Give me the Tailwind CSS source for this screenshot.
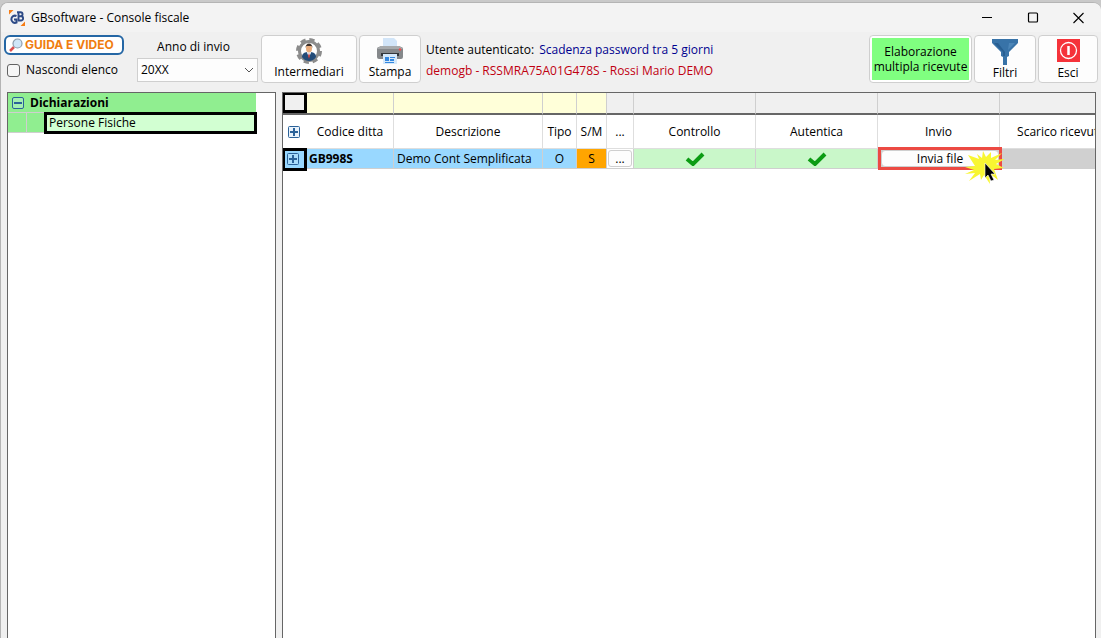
<!DOCTYPE html>
<html lang="it">
<head>
<meta charset="utf-8">
<meta name="viewport" content="width=device-width, initial-scale=1">
<title>GBsoftware - Console fiscale</title>
<script src="https://cdn.jsdelivr.net/npm/@tailwindcss/browser@4"></script>
</head>
<body class="bg-[#c9c9c9] pt-[2px] font-['Open_Sans','Noto_Sans',sans-serif] text-[12px] leading-4 text-black">
<svg class="hidden" aria-hidden="true">
  <symbol id="plus" viewBox="0 0 12 12"><rect x=".5" y=".5" width="11" height="11" rx="1" fill="#e9f2fb" stroke="#2b6299"/><path d="M2 6h8M6 2v8" stroke="#2b6299" stroke-width="2"/></symbol>
  <symbol id="plus-blue" viewBox="0 0 12 12"><rect x=".5" y=".5" width="11" height="11" rx="1" fill="#a9dcfb" stroke="#2b6299"/><path d="M2 6h8M6 2v8" stroke="#2b6299" stroke-width="2"/></symbol>
  <symbol id="check" viewBox="0 0 20 14"><path d="M2 7l6 5L18 2" fill="none" stroke="#0c9c14" stroke-width="4"/></symbol>
</svg>
<div class="flex h-[calc(100vh-2px)] flex-col overflow-hidden rounded-t-lg border-l border-t border-[#b4b4b4] bg-[#f0f0f0]">
  <header class="flex h-[29px] shrink-0 items-center bg-[#f3f3f3] pl-2">
    <svg class="h-4 w-4" viewBox="0 0 16 16" aria-hidden="true"><path d="M0 0h4.500L0 4.500zM16 16h-4.500l4.500-4.500z" fill="#f57c14"/><path d="M7.500 6A3.600 3.600 0 1 0 7.500 12.500V9.500H5" fill="none" stroke="#2d4a86" stroke-width="2"/><path d="M9.500 2v8.500h2.500a2 2 0 0 0 0-4.200H9.500h2a2 2 0 0 0 0-4.100H8" fill="none" stroke="#2d4a86" stroke-width="1.900"/></svg>
    <h1 class="ml-[6px] grow">GBsoftware - Console fiscale</h1>
    <div class="flex">
      <button class="flex h-7 w-[46px] items-center justify-center" aria-label="Riduci"><svg class="h-3 w-3" viewBox="0 0 12 12"><path d="M1 5.500h10" stroke="#000"/></svg></button>
      <button class="flex h-7 w-[45px] items-center justify-center" aria-label="Ingrandisci"><svg class="h-3 w-3" viewBox="0 0 12 12"><rect x="1.500" y="1" width="9" height="9" rx="1" fill="none" stroke="#000" stroke-width="1.200"/></svg></button>
      <button class="flex h-7 w-[46px] items-center justify-center" aria-label="Chiudi"><svg class="h-3 w-3" viewBox="0 0 12 12"><path d="M1.500 1l10 10M11.500 1l-10 10" stroke="#000" stroke-width="1.100"/></svg></button>
    </div>
  </header>

  <div class="flex h-[60px] shrink-0 items-start pl-[3px] pr-[3px] pt-[3px]">
    <div class="w-[133px]">
      <a href="#guida" class="flex h-5 w-[120px] items-center rounded-md border-2 border-[#2567a5] bg-white pl-[3px] font-['Inter',sans-serif] text-[12px] font-bold whitespace-nowrap text-[#f07d0f]">
        <svg class="h-[14px] w-[14px] shrink-0" viewBox="0 0 14 14" aria-hidden="true"><path d="M1 13l4-4" stroke="#dc4f4f" stroke-width="2.500"/><circle cx="8.500" cy="5.500" r="4.500" fill="#cfe6f8" stroke="#8d9dac" stroke-width="1.200"/></svg>
        <span class="ml-[2px]">GUIDA E VIDEO</span>
      </a>
      <label class="mt-[7px] flex items-center pl-[3px]"><input type="checkbox" class="mr-[6px] h-[13px] w-[13px] appearance-none rounded-[3px] border border-[#626262] bg-[#f6f6f6]">Nascondi elenco</label>
    </div>
    <div class="relative w-[121px]">
      <label for="anno" class="mt-1 block pr-2 text-center">Anno di invio</label>
      <select id="anno" class="mt-[3px] block h-6 w-full appearance-none border border-[#cfcfcf] bg-[#fdfdfd] pl-[3px]"><option>20XX</option></select>
      <svg class="pointer-events-none absolute right-1 bottom-2 h-2 w-[10px]" viewBox="0 0 10 8" aria-hidden="true"><path d="M1 2l4 4 4-4" fill="none" stroke="#555"/></svg>
    </div>
    <button class="ml-[3px] flex h-12 w-24 flex-col items-center rounded border border-[#cfcfcf] bg-[#fdfdfd] pt-px">
      <svg class="-mb-px h-7 w-7" viewBox="0 0 28 28" aria-hidden="true"><circle cx="14" cy="14" r="11" fill="none" stroke="#8c8c8c" stroke-width="4" stroke-dasharray="5 3.640"/><circle cx="14" cy="14" r="9.500" fill="#fff" stroke="#8c8c8c" stroke-width="3"/><path d="M7 20c0-4 3-5 7-5s7 1 7 5c-2 3-5 4-7 4s-5-1-7-4z" fill="#234b78"/><path d="M12 14h4v2l-2 4-2-4z" fill="#e6eef5"/><ellipse cx="14" cy="11.500" rx="3" ry="4" fill="#e8ab7b"/><path d="M10.500 11c0-6 7-6 7 0l-1-2h-5z" fill="#3d3029"/><path d="M14 16l1 3-1 3-1-3z" fill="#c43d3d"/></svg>
      Intermediari
    </button>
    <button class="ml-[2px] flex h-12 w-[62px] flex-col items-center rounded border border-[#cfcfcf] bg-[#fdfdfd] pt-px">
      <svg class="-mb-px h-7 w-7" viewBox="0 0 28 28" aria-hidden="true"><path d="M7 1h11l3 3v7H7z" fill="#d2e5f8"/><rect x="1" y="10" width="26" height="12" rx="2" fill="#85888b"/><path d="M1 12l3-3h20l3 3z" fill="#a7aaac"/><path d="M5 16h18v3H5z" fill="#33373b"/><circle cx="24" cy="12.500" r="1.200" fill="#f24b4b"/><path d="M7 17h14v10H7z" fill="#d5e9fb"/><path d="M9 20h4v4H9zM14 20h5v1h-5zM14 22h4v2h-4zM9 25h9v1H9z" fill="#3387df"/></svg>
      Stampa
    </button>
    <div class="ml-[5px] min-w-0 grow whitespace-nowrap pt-[7px]">
      <p>Utente autenticato: <span class="ml-[2px] text-[#00008f]">Scadenza password tra 5 giorni</span></p>
      <p class="mt-[5px] text-[#c00010]">demogb - RSSMRA75A01G478S - Rossi Mario DEMO</p>
    </div>
    <button class="h-12 w-[103px] shrink-0 rounded border border-[#cfcfcf] bg-white p-[2px]"><span class="flex h-full items-center justify-center whitespace-nowrap bg-[#80ff80] leading-[15px]">Elaborazione<br>multipla ricevute</span></button>
    <button class="ml-[2px] flex h-12 w-[62px] shrink-0 flex-col items-center rounded border border-[#cfcfcf] bg-[#fdfdfd] pt-[2px]">
      <svg class="-mb-px h-7 w-7" viewBox="0 0 28 28" aria-hidden="true"><path d="M1 1h26v4l-9 9v4l-2 1v8h-4v-8l-2-1v-4L1 5z" fill="#3873a8"/><path d="M3 5h4l7 9v4h-2v-4z" fill="#285f92"/><path d="M18 5h6l-7 7z" fill="#4c86b8"/></svg>
      Filtri
    </button>
    <button class="ml-[2px] flex h-12 w-[60px] shrink-0 flex-col items-center rounded border border-[#cfcfcf] bg-[#fdfdfd] pt-[3px]">
      <svg class="mb-[3px] h-[23px] w-[23px]" viewBox="0 0 23 23" aria-hidden="true"><path d="M0 0h23v23H0z" fill="#f5333a"/><circle cx="11.500" cy="11.500" r="8" fill="none" stroke="#fff" stroke-width="1.300"/><path d="M11.500 7v9" stroke="#fff" stroke-width="2.500"/></svg>
      Esci
    </button>
  </div>

  <main class="flex min-h-0 grow pl-[6px] pr-[5px]">
    <nav class="mr-[6px] w-[269px] shrink-0 border border-b-0 border-[#666] bg-white" aria-label="Elenco">
      <div class="mr-[19px] flex h-[19px] items-center bg-[#90ee90] pl-1 font-bold">
        <button class="mr-[6px] flex h-3 w-3 items-center justify-center rounded-[2px] border border-[#2b6299] bg-[#a4efb2]" aria-label="Comprimi"><span class="h-[2px] w-2 bg-[#2b6299]"></span></button>Dichiarazioni
      </div>
      <div class="mr-[18px] flex h-[22px]">
        <span class="mb-px w-[19px] border-t border-r border-b border-[#cfcfcf] bg-[#90ee90]"></span><span class="mb-px w-[17px] border-t border-b border-[#cfcfcf] bg-[#90ee90]"></span>
        <a href="#persone" class="flex grow items-center border-[3px] border-black bg-[#d2ffd2] pl-[2px]">Persone Fisiche</a>
      </div>
    </nav>
    <section class="min-w-0 grow overflow-hidden border border-b-0 border-[#666] bg-white" aria-label="Ditte">
      <table class="w-[839px] table-fixed border-separate border-spacing-0 text-center whitespace-nowrap">
        <colgroup><col class="w-6"><col class="w-[87px]"><col class="w-[149px]"><col class="w-[34px]"><col class="w-[30px]"><col class="w-[27px]"><col class="w-[122px]"><col class="w-[122px]"><col class="w-[122px]"><col class="w-[122px]"></colgroup>
        <thead>
          <tr class="h-[22px]">
            <td class="border-b-2 border-[#666] p-0"><div class="h-5 border-[3px] border-l-2 border-t-2 border-black bg-[#f0f0f0]"></div></td>
            <td class="border-r border-b-2 border-r-[#cfcfcf] border-b-[#666] bg-[#ffffd9] p-0"></td>
            <td class="border-r border-b-2 border-r-[#cfcfcf] border-b-[#666] bg-[#ffffd9] p-0"></td>
            <td class="border-r border-b-2 border-r-[#cfcfcf] border-b-[#666] bg-[#ffffd9] p-0"></td>
            <td class="border-r border-b-2 border-r-[#cfcfcf] border-b-[#666] bg-[#ffffd9] p-0"></td>
            <td class="border-r border-b-2 border-r-[#cfcfcf] border-b-[#666] bg-[#f0f0f0] p-0"></td>
            <td class="border-r border-b-2 border-r-[#cfcfcf] border-b-[#666] bg-[#f0f0f0] p-0"></td>
            <td class="border-r border-b-2 border-r-[#cfcfcf] border-b-[#666] bg-[#f0f0f0] p-0"></td>
            <td class="border-r border-b-2 border-r-[#cfcfcf] border-b-[#666] bg-[#f0f0f0] p-0"></td>
            <td class="border-b-2 border-b-[#666] bg-[#f0f0f0] p-0"></td>
          </tr>
          <tr class="h-[34px] *:border-b *:border-[#dedede] *:p-0 *:font-normal">
            <th><button class="ml-[5px] block h-3 w-3" aria-label="Espandi tutto"><svg class="h-3 w-3"><use href="#plus"/></svg></button></th>
            <th class="border-r">Codice ditta</th><th class="border-r">Descrizione</th><th class="border-r">Tipo</th><th class="border-r">S/M</th><th class="border-r">...</th><th class="border-r">Controllo</th><th class="border-r">Autentica</th><th class="border-r">Invio</th><th>Scarico ricevute</th>
          </tr>
        </thead>
        <tbody>
          <tr class="h-5 *:border-b *:border-[#cfcfcf] *:p-0">
            <td class="border-none! bg-[#99d8ff]"><button class="-my-[2px] flex h-[23px] w-full items-center border-[3px] border-l-2 border-black pl-[2px]" aria-label="Espandi"><svg class="h-3 w-3"><use href="#plus-blue"/></svg></button></td>
            <td class="border-r bg-[#99d8ff] text-left font-bold"><span class="pl-[2px]">GB998S</span></td>
            <td class="border-r bg-[#99d8ff] text-left"><span class="pl-[3px]">Demo Cont Semplificata</span></td>
            <td class="border-r bg-[#99d8ff]">O</td>
            <td class="border-r bg-[#ffa500]">S</td>
            <td class="border-r"><button class="mx-auto block h-[17px] w-6 rounded-[3px] border border-[#cfcfcf] bg-[#fdfdfd] leading-[13px]">...</button></td>
            <td class="border-r bg-[#c9f7c9]"><svg class="mx-auto h-[14px] w-5" role="img" aria-label="OK"><use href="#check"/></svg></td>
            <td class="border-r bg-[#c9f7c9]"><svg class="mx-auto h-[14px] w-5" role="img" aria-label="OK"><use href="#check"/></svg></td>
            <td class="relative">
              <div class="-my-[2px] -mr-[2px] h-[23px] border-[3px] border-[#ec4a43] bg-[#cfcfcf]"><button class="block h-full w-full rounded-[4px] border border-[#cfcfcf] bg-[#fdfdfd] leading-[15px]">Invia file</button></div>
              <svg class="pointer-events-none absolute top-0 -right-1 z-10 h-9 w-10" viewBox="0 0 40 36" aria-hidden="true"><path d="M4 6l11 4-2-5 5 4 1-7 3 6 5-5 0 6 11-5-7 7 10-1-9 5 8 4-10 1 4 11-9-7 1 11-6-9-3 5-1-6-11 7 6-8-10 1 9-4-9-3 10-1z" fill="#f8f632"/><path d="M21 14v15l3-3 3 6 3-1-3-6h4z" fill="#000" stroke="#fff" stroke-width=".6"/></svg>
            </td>
            <td class="bg-[#d0d0d0]"></td>
          </tr>
        </tbody>
      </table>
    </section>
  </main>
</div>
</body>
</html>
